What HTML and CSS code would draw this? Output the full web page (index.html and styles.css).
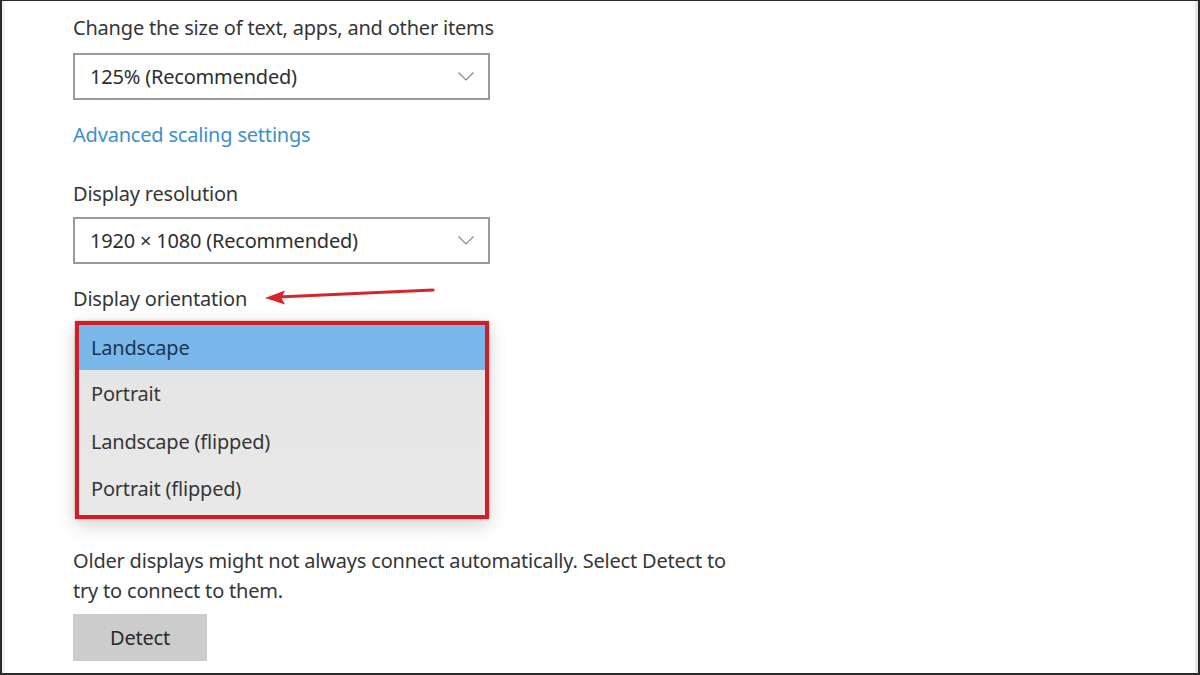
FILE: index.html
```html
<!DOCTYPE html>
<html lang="en">
<head>
    <meta charset="UTF-8">
    <title>Display settings</title>
    <link rel="stylesheet" href="styles.css">
</head>
<body>
    <div class="frame">
        <div class="settings">
            <div class="label">Change the size of text, apps, and other items</div>
            <div class="select">
                <span>125% (Recommended)</span>
                <svg class="chevron" width="16" height="9" viewBox="0 0 16 9"><path d="M0.5 0.5 L8 8 L15.5 0.5" fill="none" stroke="#8a8a8a" stroke-width="1.2"/></svg>
            </div>

            <a class="link" href="#">Advanced scaling settings</a>

            <div class="label label-gap">Display resolution</div>
            <div class="select select-near">
                <span>1920 × 1080 (Recommended)</span>
                <svg class="chevron" width="16" height="9" viewBox="0 0 16 9"><path d="M0.5 0.5 L8 8 L15.5 0.5" fill="none" stroke="#8a8a8a" stroke-width="1.2"/></svg>
            </div>

            <div class="label label-orient">Display orientation</div>
            <ul class="options">
                <li class="selected">Landscape</li>
                <li>Portrait</li>
                <li>Landscape (flipped)</li>
                <li>Portrait (flipped)</li>
            </ul>

            <p class="note">Older displays might not always connect automatically. Select Detect to<br>try to connect to them.</p>
            <button class="detect">Detect</button>
        </div>

        <!-- red annotation arrow pointing at the label -->
        <svg class="arrow" width="180" height="20" viewBox="0 0 180 20">
            <path d="M169 3 L14 10" stroke="#d6262c" stroke-width="3.2" stroke-linecap="round" fill="none"/>
            <path d="M1 11 L21 3.5 L17.5 11 L21 17.5 Z" fill="#d6262c"/>
        </svg>
    </div>
</body>
</html>
```

FILE: styles.css
```css
* {
    box-sizing: border-box;
}

html, body {
    margin: 0;
    height: 100%;
}

body {
    background-color: #fff;
    font-family: 'Noto Sans', 'Open Sans', sans-serif;
    color: #333;
}

.frame {
    position: relative;
    height: 675px;
    border-top: 1px solid #2a2a2a;
    border-left: 2px solid #2a2a2a;
    border-right: 2px solid #2a2a2a;
    border-bottom: 2px solid #2a2a2a;
    box-shadow: inset 3px 0 0 #f2f2f2, inset -3px 0 0 #e8e8e8;
}

.settings {
    padding: 13px 0 0 71px;
    width: 800px;
}

.label {
    font-size: 20px;
    line-height: 28px;
    letter-spacing: -0.2px;
    color: #363636;
}

.label-gap {
    margin-top: 31px;
}

.label-orient {
    margin-top: 21px;
}

.select {
    margin-top: 11px;
    width: 417px;
    height: 47px;
    border: 2px solid #9a9a9a;
    display: flex;
    align-items: center;
    justify-content: space-between;
    padding: 0 14px 0 15px;
    font-size: 20px;
    letter-spacing: -0.2px;
    color: #2e2e2e;
}

.select-near {
    margin-top: 9px;
}

.chevron {
    display: block;
}

.link {
    display: block;
    margin-top: 21px;
    font-size: 20px;
    line-height: 28px;
    letter-spacing: -0.2px;
    color: #3c8fce;
    text-decoration: none;
}

.options {
    list-style: none;
    margin: 8px 0 0 2px;
    padding: 0;
    width: 414px;
    height: 198px;
    border: 4px solid #cc1f28;
    background: linear-gradient(#e4e4e4, #e9e9ea);
    box-shadow: 0 6px 18px rgba(0, 0, 0, 0.18), 0 0 2px rgba(204, 31, 40, 0.5);
}

.options li {
    height: 47.5px;
    display: flex;
    align-items: center;
    padding-left: 12px;
    font-size: 20px;
    letter-spacing: -0.2px;
    color: #363636;
}

.options li.selected {
    height: 45px;
    background-color: #7ab8eb;
    color: #1d3550;
}

.note {
    margin: 27px 0 0;
    font-size: 20px;
    line-height: 30px;
    letter-spacing: -0.2px;
    color: #363636;
}

.detect {
    display: block;
    margin-top: 8px;
    width: 134px;
    height: 47px;
    border: none;
    background-color: #cccccc;
    font-family: inherit;
    font-size: 20px;
    letter-spacing: -0.2px;
    color: #2a2a2a;
}

.arrow {
    position: absolute;
    left: 262px;
    top: 286px;
}
```
